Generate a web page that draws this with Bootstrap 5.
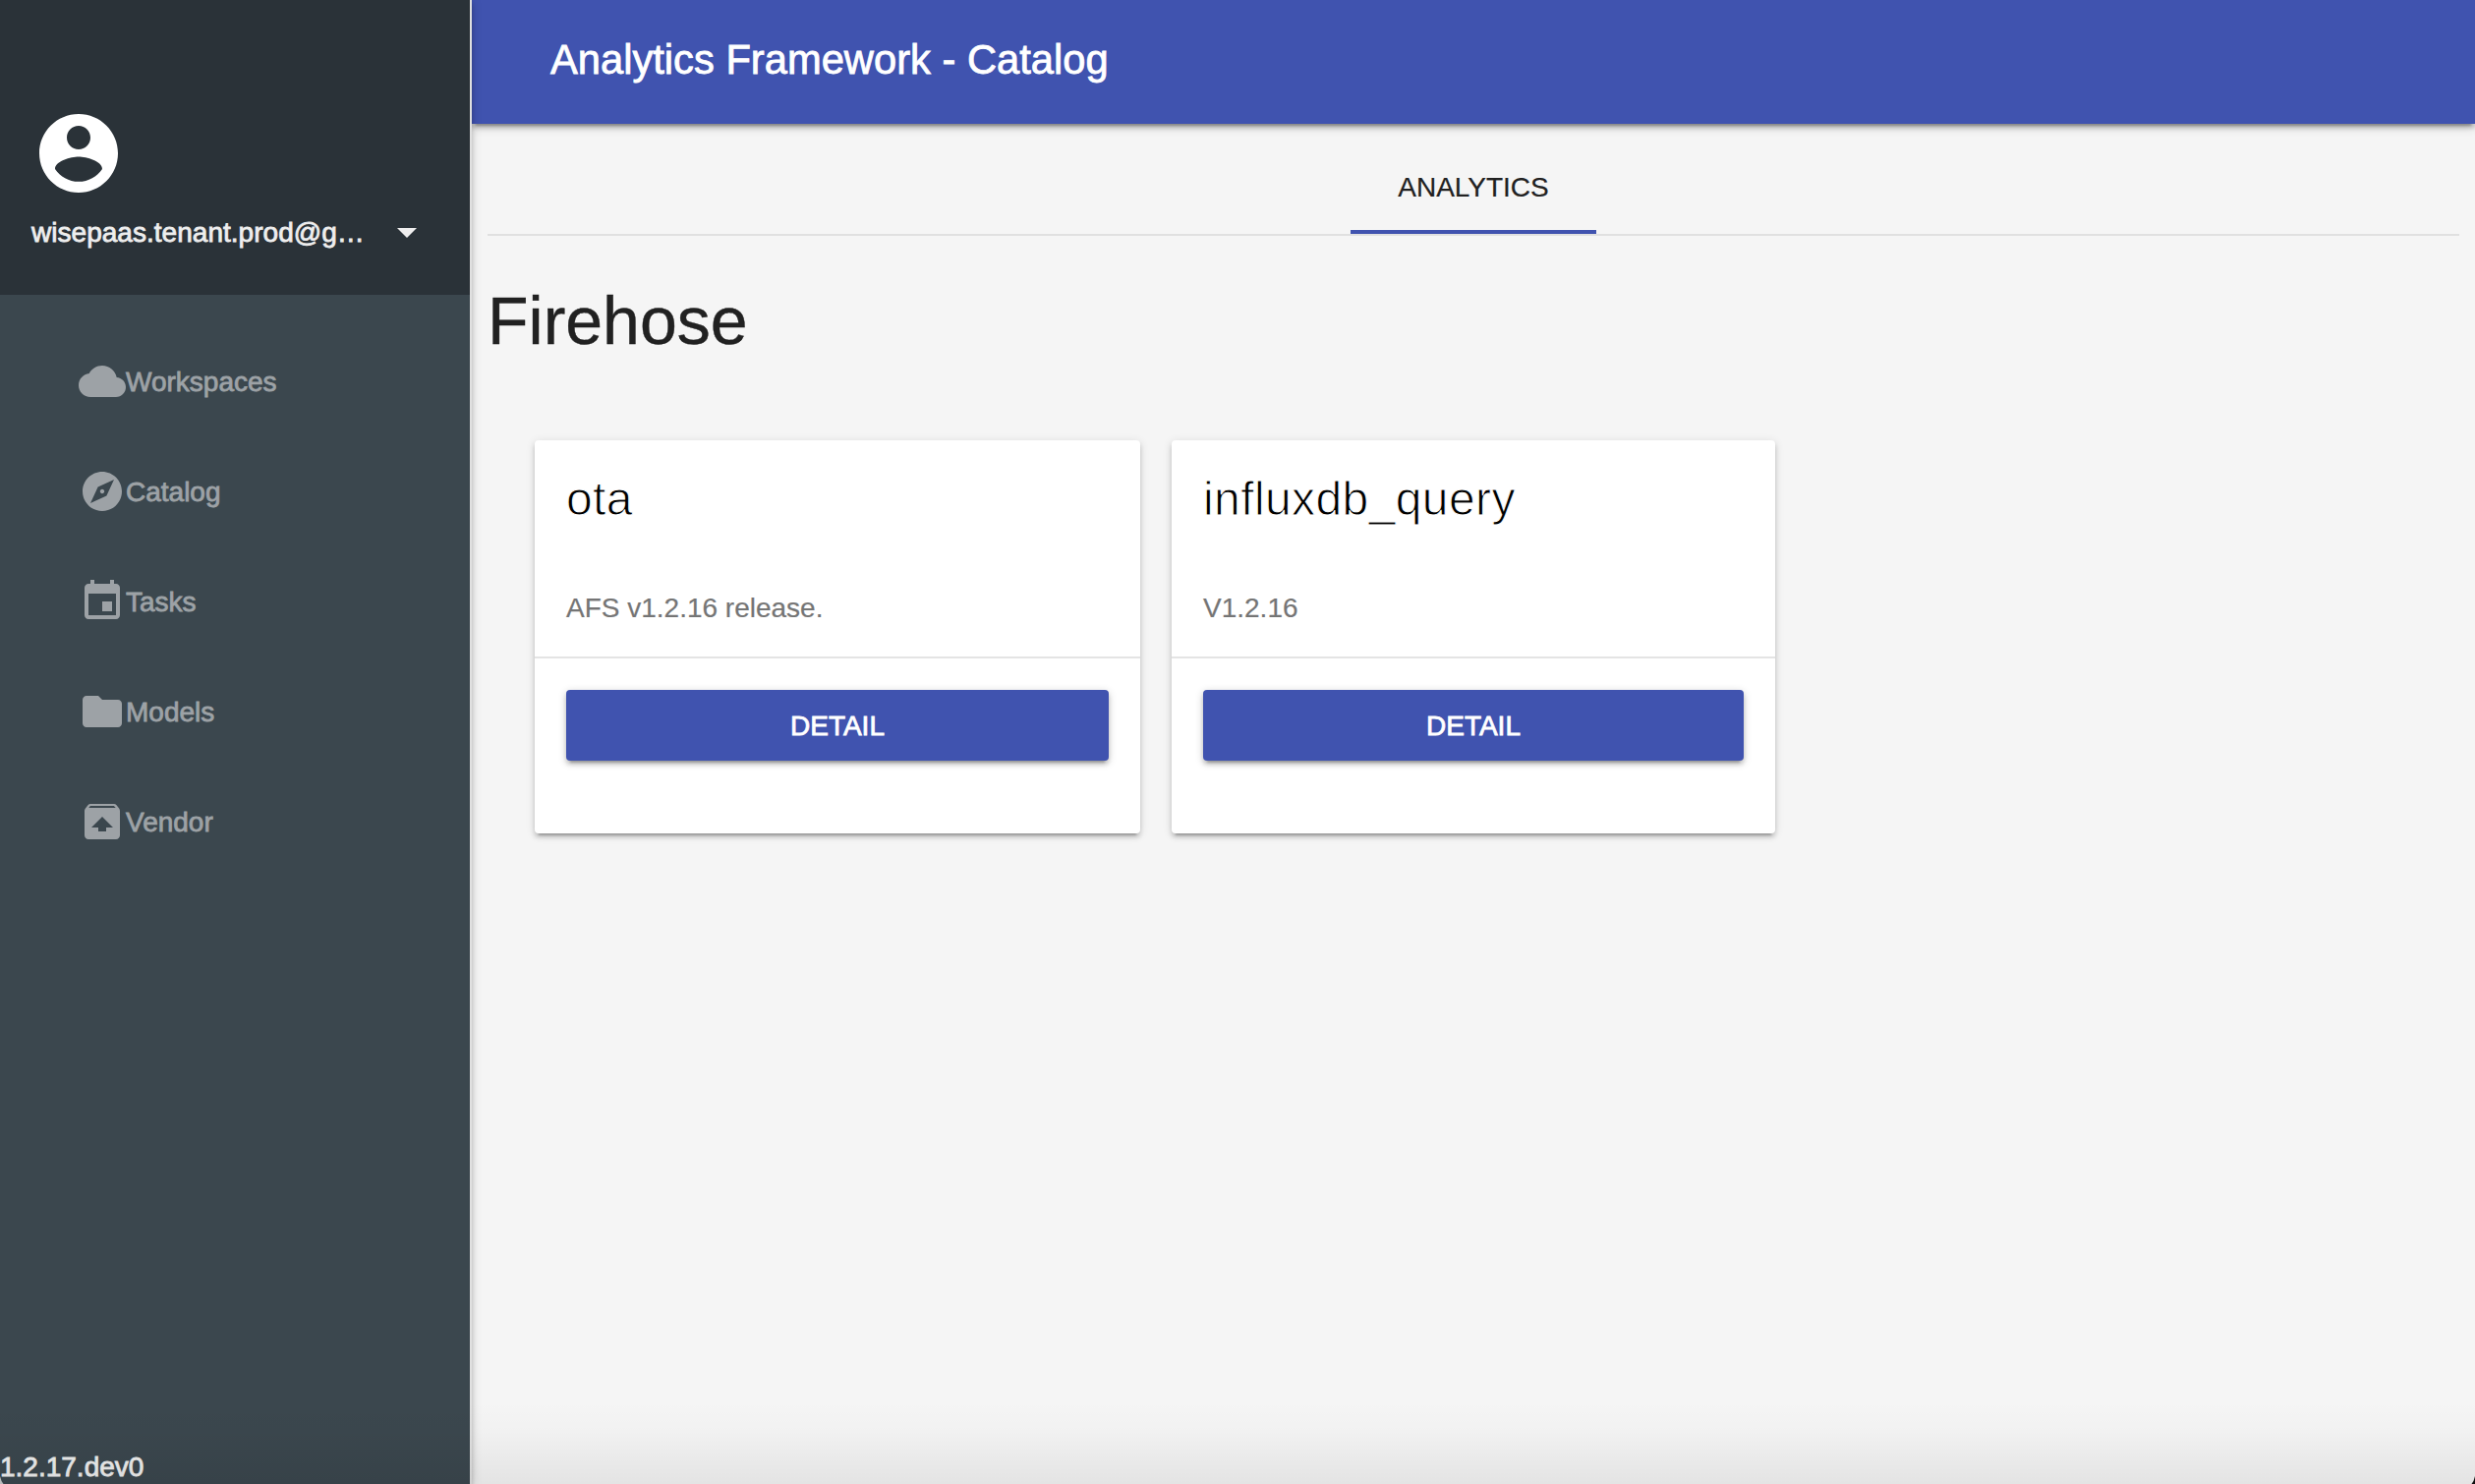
<!DOCTYPE html>
<html lang="en">
<head>
<meta charset="utf-8">
<meta name="viewport" content="width=device-width, initial-scale=1">
<title>Analytics Framework - Catalog</title>
<link href="https://cdn.jsdelivr.net/npm/bootstrap@5.3.0/dist/css/bootstrap.min.css" rel="stylesheet">
<style>
  body { font-family: "Liberation Sans", Arial, sans-serif; font-size: 28px; line-height: 40px; color: #212121; background: #f5f5f5; }
  .side-nav { width: 480px; background: #3b474e; border-right: 2px solid #e0e0e0; box-shadow: 0 4px 4px 0 rgba(0,0,0,.14), 0 6px 2px -4px rgba(0,0,0,.12), 0 2px 10px 0 rgba(0,0,0,.2); z-index: 2; }
  .user-panel { height: 300px; padding: 108px 32px 0; background: #2a3238; color: #eee; }
  .user-panel svg.avatar { width: 96px; height: 96px; fill: #fff; }
  .user-row { margin-top: 12px; }
  .user-name { padding-top: 2px; line-height: 38px; letter-spacing: .03px; -webkit-text-stroke: .8px currentColor; }
  .caret { width: 20px; height: 10px; fill: #eee; margin: 2px 22px 0 0; }
  .side-links { padding-top: 32px; color: #9da2a6; }
  .side-links .nav-link { height: 112px; padding: 0 0 0 80px; color: inherit; -webkit-text-stroke: .8px currentColor; }
  .side-links .nav-link span { padding-top: 2px; }
  .side-links svg { width: 48px; height: 48px; fill: currentColor; stroke: none; }
  .version { color: #eee; line-height: 34px; -webkit-text-stroke: .8px currentColor; }
  .top-bar { height: 126px; padding: 0 80px 4px; background: #4053af; box-shadow: 0 4px 4px 0 rgba(0,0,0,.14), 0 6px 2px -4px rgba(0,0,0,.2), 0 2px 10px 0 rgba(0,0,0,.3); }
  .top-bar h1 { font-size: 41.7px; line-height: 60px; color: #fff; -webkit-text-stroke: .8px currentColor; }
  .page-body { padding: 16px 16px 0; }
  .tab-strip { height: 98px; border-bottom: 2px solid #e0e0e0; }
  .tab-strip .nav-link { width: 250px; height: 96px; padding: 5px 0 0; color: #212121; border-bottom: 4px solid #4053af; border-radius: 0; -webkit-text-stroke: .2px currentColor; }
  .group-title { font-size: 68px; line-height: 80px; margin: 46px 0 0; -webkit-text-stroke: .4px currentColor; }
  .tiles { padding: 82px 64px 0; gap: 32px; }
  .tile { width: 616px; height: 400px; border: 0; border-radius: 4px; box-shadow: 0 4px 4px 0 rgba(0,0,0,.14), 0 6px 2px -4px rgba(0,0,0,.2), 0 2px 10px 0 rgba(0,0,0,.14); }
  .tile + .tile { width: 614px; }
  .tile-head { height: 222px; padding: 32px 32px 0; border-bottom: 2px solid #e4e4e4; }
  .tile-head h3 { font-size: 48px; line-height: 56px; color: #000; letter-spacing: .4px; margin-bottom: 63px; -webkit-text-stroke: 1px #fff; }
  .tile-head p { color: #757575; -webkit-text-stroke: .2px currentColor; }
  .btn-detail { height: 72px; margin: 32px 32px 0; padding: 0; font-size: 28px; line-height: 73px; border: 0; border-radius: 4px; color: #fff; background: #4053af; -webkit-text-stroke: .8px currentColor; box-shadow: 0 4px 4px 0 rgba(0,0,0,.14), 0 6px 2px -4px rgba(0,0,0,.2), 0 2px 8px 0 rgba(0,0,0,.2); }
  .bottom-shade { height: 84px; z-index: 5; pointer-events: none; background: linear-gradient(rgba(0,0,0,0), rgba(0,0,0,.015) 35%, rgba(0,0,0,.07)); }
  .corner { width: 4px; height: 8px; z-index: 6; }
</style>
<script src="https://cdn.jsdelivr.net/npm/bootstrap@5.3.0/dist/js/bootstrap.bundle.min.js"></script>
</head>
<body class="vh-100 overflow-hidden d-flex position-relative">
  <aside class="side-nav d-flex flex-column flex-shrink-0 position-relative">
    <div class="user-panel">
      <svg class="avatar d-block" viewBox="0 0 24 24"><path d="M12 2C6.48 2 2 6.48 2 12s4.480 10 10 10 10-4.480 10-10S17.520 2 12 2zm0 3c1.660 0 3 1.340 3 3s-1.340 3-3 3-3-1.340-3-3 1.340-3 3-3zm0 14.200c-2.500 0-4.710-1.280-6-3.220.030-1.990 4-3.080 6-3.080 1.990 0 5.970 1.090 6 3.080-1.290 1.940-3.500 3.220-6 3.220z"/></svg>
      <div class="user-row d-flex align-items-center justify-content-between">
        <span class="user-name text-nowrap">wisepaas.tenant.prod@g…</span>
        <svg class="caret" viewBox="0 0 10 5"><path d="M0 0l5 5 5-5z"/></svg>
      </div>
    </div>
    <nav class="side-links nav flex-column">
      <a class="nav-link d-flex align-items-center"><svg viewBox="0 0 24 24"><path d="M19.350 10.040C18.670 6.590 15.640 4 12 4 9.110 4 6.600 5.640 5.350 8.040 2.340 8.360 0 10.910 0 14c0 3.310 2.690 6 6 6h13c2.760 0 5-2.240 5-5 0-2.640-2.050-4.780-4.650-4.960z"/></svg><span>Workspaces</span></a>
      <a class="nav-link d-flex align-items-center"><svg viewBox="0 0 24 24"><path d="M12 10.900c-.61 0-1.100.49-1.100 1.100s.49 1.100 1.100 1.100c.61 0 1.100-.49 1.100-1.100s-.49-1.100-1.100-1.100zM12 2C6.480 2 2 6.480 2 12s4.480 10 10 10 10-4.480 10-10S17.520 2 12 2zm2.190 12.190L6 18l3.810-8.190L18 6l-3.810 8.190z"/></svg><span>Catalog</span></a>
      <a class="nav-link d-flex align-items-center"><svg viewBox="0 0 24 24"><path d="M17 12h-5v5h5v-5zM16 1v2H8V1H6v2H5c-1.110 0-1.990.9-1.990 2L3 19c0 1.100.89 2 2 2h14c1.100 0 2-.9 2-2V5c0-1.100-.9-2-2-2h-1V1h-2zm3 18H5V8h14v11z"/></svg><span>Tasks</span></a>
      <a class="nav-link d-flex align-items-center"><svg viewBox="0 0 24 24"><path d="M10 4H4c-1.100 0-1.990.9-1.990 2L2 18c0 1.100.9 2 2 2h16c1.100 0 2-.9 2-2V8c0-1.100-.9-2-2-2h-8l-2-2z"/></svg><span>Models</span></a>
      <a class="nav-link d-flex align-items-center"><svg viewBox="0 0 24 24"><path d="M20.550 5.220l-1.390-1.680C18.880 3.210 18.470 3 18 3H6c-.47 0-.88.21-1.150.55L3.460 5.220C3.170 5.570 3 6.010 3 6.500V19c0 1.100.89 2 2 2h14c1.100 0 2-.9 2-2V6.500c0-.49-.17-.93-.45-1.280zM12 9.500l5.500 5.500H14v2h-4v-2H6.500L12 9.500zM5.120 5l.82-1h12l.93 1H5.120z"/></svg><span>Vendor</span></a>
    </nav>
    <div class="version mt-auto">1.2.17.dev0</div>
  </aside>

  <main class="flex-grow-1">
    <header class="top-bar d-flex align-items-center">
      <h1 class="m-0 fw-normal text-nowrap">Analytics Framework - Catalog</h1>
    </header>
    <div class="page-body">
      <div class="tab-strip nav justify-content-center">
        <a class="nav-link d-flex align-items-center justify-content-center">ANALYTICS</a>
      </div>
      <h2 class="group-title fw-normal">Firehose</h2>
    </div>
    <section class="tiles d-flex">
      <article class="card tile">
        <div class="tile-head">
          <h3 class="fw-normal mt-0">ota</h3>
          <p class="m-0">AFS v1.2.16 release.</p>
        </div>
        <button class="btn btn-detail" type="button">DETAIL</button>
      </article>
      <article class="card tile">
        <div class="tile-head">
          <h3 class="fw-normal mt-0">influxdb_query</h3>
          <p class="m-0">V1.2.16</p>
        </div>
        <button class="btn btn-detail" type="button">DETAIL</button>
      </article>
    </section>
  </main>

  <!-- dimming at the foot of the window and its rounded corners -->
  <div class="bottom-shade position-absolute bottom-0 start-0 w-100"></div>
  <svg class="corner position-absolute bottom-0 start-0" viewBox="0 0 4 8"><path d="M0 0Q1 5 3.500 8H0z" fill="#b9bcbd"/></svg>
  <svg class="corner position-absolute bottom-0 end-0" viewBox="0 0 4 8"><path d="M4 0Q3 5 .5 8H4z" fill="#111"/></svg>
</body>
</html>
